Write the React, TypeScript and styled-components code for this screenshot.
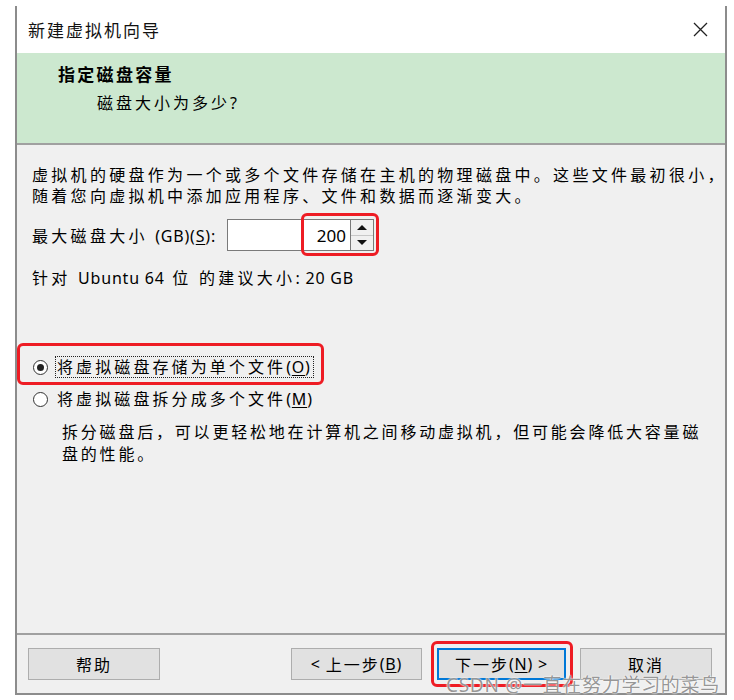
import React from "react";
import styled, { createGlobalStyle } from "styled-components";

const FONT = `"Noto Sans", "Noto Sans CJK SC", sans-serif`;

const GlobalStyle = createGlobalStyle`
  html, body {
    margin: 0;
    padding: 0;
    background: #fff;
  }
  body {
    font-family: ${FONT};
    color: #000;
  }
`;

const Page = styled.div`
  position: relative;
  width: 734px;
  height: 700px;
  padding-top: 6px;
  box-sizing: border-box;
  background: #fff;
  overflow: hidden;
`;

const Window = styled.div`
  margin-left: 15px;
  width: 712px;
  height: 689px;
  box-sizing: border-box;
  border-left: 2px solid #8c8c8c;
  border-right: 2px solid #8c8c8c;
  border-bottom: 2px solid #8c8c8c;
  display: flex;
  flex-direction: column;
`;

const TitleBar = styled.div`
  height: 47px;
  flex-shrink: 0;
  display: flex;
  align-items: center;
  justify-content: space-between;
  padding: 0 17px 0 11px;
  background: #fff;
`;

const Title = styled.span`
  font-size: 17px;
  letter-spacing: 2px;
  color: #111;
`;

const Header = styled.div`
  height: 92px;
  flex-shrink: 0;
  box-sizing: border-box;
  background: #cce8cf;
  border-bottom: 2px solid #a0a0a0;
  padding: 11px 0 0 41px;
`;

const HeaderTitle = styled.div`
  font-size: 17px;
  font-weight: 700;
  letter-spacing: 2.3px;
  line-height: 22px;
`;

const HeaderSub = styled.div`
  margin: 6px 0 0 39px;
  font-size: 16px;
  letter-spacing: 3px;
  line-height: 22px;
`;

const Body = styled.div`
  flex: 1;
  background: #f0f0f0;
  border-bottom: 2px solid #a0a0a0;
  padding: 20px 0 0 15px;
`;

const Text = styled.div<{ $top?: number; $indent?: number; $lh?: number; $ls?: number }>`
  margin-top: ${(p) => p.$top ?? 0}px;
  margin-left: ${(p) => p.$indent ?? 0}px;
  font-size: 16px;
  letter-spacing: ${(p) => p.$ls ?? 3.3}px;
  line-height: ${(p) => p.$lh ?? 21}px;
  white-space: nowrap;
`;

const Lat = styled.span`
  letter-spacing: 0.8px;
`;

const Mn = styled.span`
  text-decoration: underline;
  text-underline-offset: 2px;
  letter-spacing: 0.8px;
`;

const SizeRow = styled.div`
  margin-top: 12px;
  height: 32px;
  display: flex;
  align-items: center;
  gap: 11px;
`;

const Label = styled.span`
  font-size: 16px;
  letter-spacing: 3.3px;
`;

const SpinBox = styled.div`
  position: relative;
  display: flex;
  width: 147px;
  height: 32px;
`;

const Field = styled.div`
  flex: 1;
  background: #fff;
  border: 1px solid #7a7a7a;
  display: flex;
  align-items: center;
  justify-content: flex-end;
  padding-right: 4px;
  font-size: 17px;
`;

const Spinner = styled.div`
  width: 22px;
  display: flex;
  flex-direction: column;
  border: 1px solid #7a7a7a;
  border-left: none;
  background: #f0f0f0;
`;

const SpinHalf = styled.div<{ $down?: boolean }>`
  flex: 1;
  display: flex;
  align-items: center;
  justify-content: center;
  border-top: ${(p) => (p.$down ? "1px solid #c8c8c8" : "none")};

  &::after {
    content: "";
    border-left: 5px solid transparent;
    border-right: 5px solid transparent;
    ${(p) => (p.$down ? "border-top: 5px solid #111;" : "border-bottom: 5px solid #111;")}
  }
`;

const Mark = styled.div<{ $t: number; $l: number; $r: number; $b: number }>`
  position: absolute;
  top: ${(p) => p.$t}px;
  left: ${(p) => p.$l}px;
  right: ${(p) => p.$r}px;
  bottom: ${(p) => p.$b}px;
  border: 3px solid #ee1c24;
  border-radius: 6px;
  pointer-events: none;
`;

const Options = styled.div`
  margin-top: 67px;
  display: flex;
  flex-direction: column;
  gap: 10px;
`;

const RadioRow = styled.div`
  position: relative;
  height: 22px;
  display: flex;
  align-items: center;
  width: max-content;
`;

const RadioDot = styled.span<{ $on?: boolean }>`
  width: 13px;
  height: 13px;
  margin-left: 1px;
  border: 1px solid #333;
  border-radius: 50%;
  background: #fff;
  display: flex;
  align-items: center;
  justify-content: center;

  &::after {
    content: "";
    width: 7px;
    height: 7px;
    border-radius: 50%;
    background: ${(p) => (p.$on ? "#222" : "transparent")};
  }
`;

const RadioLabel = styled.span<{ $focus?: boolean }>`
  margin-left: 8px;
  padding: 0 2px 0 1px;
  font-size: 16px;
  letter-spacing: 3.1px;
  line-height: 20px;
  outline: ${(p) => (p.$focus ? "1px dotted #222" : "none")};
`;

const Footer = styled.div`
  height: 58px;
  flex-shrink: 0;
  box-sizing: border-box;
  background: #f0f0f0;
  display: flex;
  align-items: flex-start;
  padding: 13px 13px 0 11px;
`;

const Spacer = styled.div`
  flex: 1;
`;

const Button = styled.div<{ $w: number; $primary?: boolean; $gap?: number }>`
  position: relative;
  width: ${(p) => p.$w}px;
  height: 32px;
  margin-left: ${(p) => p.$gap ?? 0}px;
  box-sizing: border-box;
  background: #e1e1e1;
  border: ${(p) => (p.$primary ? "2px solid #0078d7" : "1px solid #adadad")};
  display: flex;
  align-items: center;
  justify-content: center;
  font-size: 16px;
  letter-spacing: 2px;
`;

const Watermark = styled.div`
  position: absolute;
  left: 446px;
  top: 670px;
  font-size: 19px;
  letter-spacing: 0.7px;
  color: rgba(105, 105, 105, 0.7);
  text-shadow: 0 0 2px #fff, 0 0 1px #fff;
  white-space: nowrap;
`;

const CloseIcon = () => (
  <svg width="15" height="15" viewBox="0 0 15 15">
    <path d="M1 1 L14 14 M14 1 L1 14" stroke="#222" strokeWidth="1.3" fill="none" />
  </svg>
);

export default function App() {
  return (
    <>
      <GlobalStyle />
      <Page>
        <Window>
          <TitleBar>
            <Title>新建虚拟机向导</Title>
            <CloseIcon />
          </TitleBar>
          <Header>
            <HeaderTitle>指定磁盘容量</HeaderTitle>
            <HeaderSub>磁盘大小为多少?</HeaderSub>
          </Header>
          <Body>
            <Text>
              虚拟机的硬盘作为一个或多个文件存储在主机的物理磁盘中。这些文件最初很小，
              <br />
              随着您向虚拟机中添加应用程序、文件和数据而逐渐变大。
            </Text>
            <SizeRow>
              <Label>
                最大磁盘大小 <Lat>(GB)(</Lat>
                <Mn>S</Mn>
                <Lat>):</Lat>
              </Label>
              <SpinBox>
                <Field>200</Field>
                <Spinner>
                  <SpinHalf />
                  <SpinHalf $down />
                </Spinner>
                <Mark $t={-6} $l={74} $r={-5} $b={-5} />
              </SpinBox>
            </SizeRow>
            <Text $top={17}>
              针对 <Lat>Ubuntu 64</Lat> 位 的建议大小<Lat>: 20 GB</Lat>
            </Text>
            <Options>
              <RadioRow>
                <RadioDot $on />
                <RadioLabel $focus>
                  将虚拟磁盘存储为单个文件<Lat>(</Lat>
                  <Mn>O</Mn>
                  <Lat>)</Lat>
                </RadioLabel>
                <Mark $t={-13} $l={-15} $r={-11} $b={-7} />
              </RadioRow>
              <RadioRow>
                <RadioDot />
                <RadioLabel>
                  将虚拟磁盘拆分成多个文件<Lat>(</Lat>
                  <Mn>M</Mn>
                  <Lat>)</Lat>
                </RadioLabel>
              </RadioRow>
            </Options>
            <Text $top={11} $indent={30} $lh={22} $ls={2.8}>
              拆分磁盘后，可以更轻松地在计算机之间移动虚拟机，但可能会降低大容量磁
              <br />
              盘的性能。
            </Text>
          </Body>
          <Footer>
            <Button $w={132}>帮助</Button>
            <Spacer />
            <Button $w={131}>
              <Lat>&lt;&nbsp;</Lat>上一步<Lat>(</Lat>
              <Mn>B</Mn>
              <Lat>)</Lat>
            </Button>
            <Button $w={129} $gap={15} $primary>
              下一步<Lat>(</Lat>
              <Mn>N</Mn>
              <Lat>) &gt;</Lat>
              <Mark $t={-9} $l={-8} $r={-9} $b={-9} />
            </Button>
            <Button $w={132} $gap={14}>
              取消
            </Button>
          </Footer>
        </Window>
        <Watermark>CSDN @一直在努力学习的菜鸟</Watermark>
      </Page>
    </>
  );
}
